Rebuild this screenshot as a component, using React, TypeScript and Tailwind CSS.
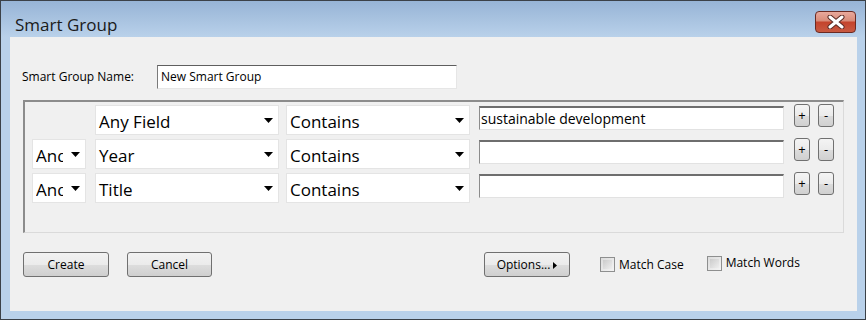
import React from "react";

const font = { fontFamily: '"Open Sans", "Noto Sans", sans-serif' };

function Caret() {
  return (
    <svg width="9" height="5" viewBox="0 0 9 5" className="shrink-0 mt-[1px]">
      <path d="M0 0 H9 L4.5 5 Z" fill="#000" />
    </svg>
  );
}

function Dropdown({ label, width, clip }: { label: string; width: string; clip?: boolean }) {
  return (
    <div className={`${width} h-[30px] bg-white border border-[#e4e4e4] flex items-center justify-between pl-[3px] pr-[5px] shrink-0`}>
      {clip ? (
        <span className="w-[27px] mt-[4px] overflow-hidden whitespace-nowrap text-[17px] leading-[24px] text-black">{label}</span>
      ) : (
        <span className="mt-[4px] text-[17px] leading-[24px] text-black whitespace-nowrap">{label}</span>
      )}
      <Caret />
    </div>
  );
}

function TextField({ value }: { value?: string }) {
  return (
    <div className="w-[305px] h-[24px] mt-[1px] ml-[9px] bg-white border-t-2 border-t-[#6e6e6e] border-l border-l-[#8c8c8c] border-r border-r-[#e2e2e2] border-b border-b-[#e2e2e2] pl-[1px] flex items-center shrink-0">
      <span className="text-[14px] leading-[20px] text-black whitespace-nowrap">{value}</span>
    </div>
  );
}

function SmallBtn({ ch, ml }: { ch: string; ml: string }) {
  return (
    <div className={`${ml} w-[16px] h-[23px] -mt-[1px] rounded-[3px] border border-[#707070] bg-[linear-gradient(180deg,#f4f4f4_0%,#ebebeb_50%,#dcdcdc_51%,#d0d0d0_100%)] flex items-center justify-center shrink-0`}>
      <span className="text-[13px] leading-none text-black">{ch}</span>
    </div>
  );
}

function Row({ first, field }: { first?: boolean; field: string }) {
  return (
    <div className="flex items-start h-[30px]">
      {first ? <div className="w-[54px] shrink-0" /> : <Dropdown label="And" width="w-[54px]" clip />}
      <div className="ml-[9px]">
        <Dropdown label={field} width="w-[184px]" />
      </div>
      <div className="ml-[7px]">
        <Dropdown label="Contains" width="w-[184px]" />
      </div>
      <TextField value={first ? "sustainable development" : ""} />
      <SmallBtn ch="+" ml="ml-[10px]" />
      <SmallBtn ch="-" ml="ml-[8px]" />
    </div>
  );
}

function Button({ children, w, ml }: { children: React.ReactNode; w: string; ml: string }) {
  return (
    <div className={`${w} ${ml} h-[25px] rounded-[3px] border border-[#707070] bg-[linear-gradient(180deg,#f2f2f2_0%,#ebebeb_50%,#dddddd_51%,#cfcfcf_100%)] flex items-center justify-center shrink-0`}>
      <span className="mt-[1px] text-[12px] leading-none text-black flex items-center">{children}</span>
    </div>
  );
}

function Checkbox({ label, ml, extra }: { label: string; ml: string; extra?: string }) {
  return (
    <div className={`flex items-center ${ml} ${extra ?? ""}`}>
      <div className="w-[15px] h-[15px] border border-[#8e8f8f] bg-[linear-gradient(135deg,#dcdcdc_0%,#f4f4f4_100%)] p-[2px]">
        <div className="w-full h-full bg-[linear-gradient(135deg,#cbcbcb_0%,#eeeeee_100%)]" />
      </div>
      <span className="ml-[4px] text-[12px] leading-none text-black">{label}</span>
    </div>
  );
}

export default function App() {
  return (
    <div
      style={font}
      className="w-[866px] h-[320px] border border-[#3b4148] bg-[linear-gradient(180deg,#97b4d6_0px,#b9d1ea_36px,#b9d1ea_100%)] flex flex-col overflow-hidden"
    >
      {/* Title bar */}
      <div className="h-[36px] flex items-start justify-between shrink-0">
        <div className="pl-[14px] pt-[12px] text-[17px] leading-[24px] text-[#1a1a1a]">Smart Group</div>
        <div className="mt-[10px] mr-[9px] w-[41px] h-[22px] rounded-[4px] border border-[#6b2a22] bg-[linear-gradient(180deg,#e9a99c_0%,#d88b78_45%,#c4432c_50%,#c85a42_100%)] flex items-center justify-center">
          <svg width="18" height="14" viewBox="0 0 18 14">
            <path d="M3 2 L15 12 M15 2 L3 12" stroke="#5a2a24" strokeWidth="5" strokeLinecap="round" />
            <path d="M3 2 L15 12 M15 2 L3 12" stroke="#ffffff" strokeWidth="3" strokeLinecap="round" />
          </svg>
        </div>
      </div>

      {/* Content */}
      <div className="flex-1 ml-[9px] mr-[8px] mb-[8px] bg-[#f0f0f0] flex flex-col pl-[12px] pt-[28px]">
        <div className="flex items-center h-[24px]">
          <div className="w-[135px] text-[12px] text-black">Smart Group Name:</div>
          <div className="w-[300px] h-[24px] bg-white border-t border-t-[#5e5e5e] border-l border-l-[#7a7a7a] border-r border-r-[#e6e6e6] border-b border-b-[#e6e6e6] pl-[3px] flex items-center">
            <span className="text-[12px] leading-none text-black">New Smart Group</span>
          </div>
        </div>

        <div className="mt-[11px] ml-[1px] w-[821px] h-[133px] border-t-2 border-l-2 border-t-[#8c8c8c] border-l-[#8c8c8c] border-r border-b border-r-[#dadada] border-b-[#dadada] pt-[3px] pl-[7px] flex flex-col gap-[4px]">
          <Row first field="Any Field" />
          <Row field="Year" />
          <Row field="Title" />
        </div>

        <div className="mt-[19px] ml-[1px] flex items-center">
          <Button w="w-[86px]" ml="ml-0">Create</Button>
          <Button w="w-[85px]" ml="ml-[18px]">Cancel</Button>
          <Button w="w-[86px]" ml="ml-[272px]">
            Options...
            <svg width="4" height="7" viewBox="0 0 4 7" className="ml-[3px]">
              <path d="M0 0 L4 3.5 L0 7 Z" fill="#000" />
            </svg>
          </Button>
          <Checkbox label="Match Case" ml="ml-[30px]" />
          <Checkbox label="Match Words" ml="ml-[23px]" extra="mb-[3px]" />
        </div>
      </div>
    </div>
  );
}
